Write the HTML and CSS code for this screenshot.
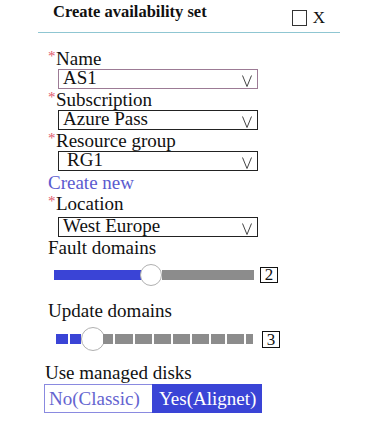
FILE: index.html
```html
<!DOCTYPE html>
<html>
<head>
<meta charset="utf-8">
<link rel="stylesheet" href="styles.css">
</head>
<body>
<div class="header">
  <div class="title">Create availability set</div>
  <div class="close-group"><span class="box-icon"></span><span class="x">X</span></div>
</div>
<div class="form">
  <div class="label"><span class="req">*</span>Name</div>
  <div class="select select-name"><span class="val">AS1</span><svg class="chev" width="10" height="12" viewBox="0 0 10 12"><polyline points="0.5,0.5 5,11.5 9.5,0.5" fill="none" stroke="#444" stroke-width="1"/></svg></div>
  <div class="label"><span class="req">*</span>Subscription</div>
  <div class="select"><span class="val">Azure Pass</span><svg class="chev" width="10" height="12" viewBox="0 0 10 12"><polyline points="0.5,0.5 5,11.5 9.5,0.5" fill="none" stroke="#444" stroke-width="1"/></svg></div>
  <div class="label"><span class="req">*</span>Resource group</div>
  <div class="select"><span class="val val-rg">RG1</span><svg class="chev" width="10" height="12" viewBox="0 0 10 12"><polyline points="0.5,0.5 5,11.5 9.5,0.5" fill="none" stroke="#444" stroke-width="1"/></svg></div>
  <div class="link">Create new</div>
  <div class="label"><span class="req">*</span>Location</div>
  <div class="select select-loc"><span class="val">West Europe</span><svg class="chev" width="10" height="12" viewBox="0 0 10 12"><polyline points="0.5,0.5 5,11.5 9.5,0.5" fill="none" stroke="#444" stroke-width="1"/></svg></div>
  <div class="label">Fault domains</div>
  <div class="slider-row slider-fault">
    <div class="track-blue"></div>
    <div class="thumb"></div>
    <div class="track-gray"></div>
    <div class="num">2</div>
  </div>
  <div class="label label-update">Update domains</div>
  <div class="slider-row slider-update">
    <div class="seg blue w12"></div>
    <div class="seg blue w11"></div>
    <div class="thumb thumb-lg"></div>
    <div class="seg gray w10"></div>
    <div class="seg gray w18"></div>
    <div class="seg gray w17"></div>
    <div class="seg gray w17"></div>
    <div class="seg gray w17"></div>
    <div class="seg gray w17"></div>
    <div class="seg gray w14"></div>
    <div class="seg gray w17"></div>
    <div class="seg gray w7"></div>
    <div class="num num-update">3</div>
  </div>
  <div class="label label-disks">Use managed disks</div>
  <div class="toggle">
    <div class="opt opt-no">No(Classic)</div>
    <div class="opt opt-yes">Yes(Alignet)</div>
  </div>
</div>
</body>
</html>
```
FILE: styles.css
```css
html, body {
  margin: 0;
  padding: 0;
  background: #ffffff;
}
body {
  font-family: "Liberation Serif", "Times New Roman", "DejaVu Serif", serif;
  color: #111111;
}
.header {
  margin-left: 38px;
  width: 302px;
  height: 33px;
  box-sizing: border-box;
  border-bottom: 1px solid #8fc6d2;
  padding: 0 15px;
  display: flex;
  justify-content: space-between;
  align-items: flex-start;
}
.title {
  font-size: 16.5px;
  font-weight: bold;
  line-height: 21px;
  padding-top: 1px;
}
.close-group {
  display: flex;
  align-items: flex-start;
  margin-top: 8px;
}
.box-icon {
  display: block;
  width: 15px;
  height: 16px;
  box-sizing: border-box;
  border: 1px solid #333333;
  margin-top: 2px;
}
.x {
  font-size: 17px;
  line-height: 20px;
  margin-left: 6px;
}
.form {
  padding-left: 48px;
  padding-top: 15px;
}
.label {
  font-size: 19px;
  line-height: 21px;
  height: 21px;
  white-space: nowrap;
}
.req {
  color: #e05a6c;
  font-size: 15px;
  vertical-align: top;
  line-height: 17px;
  display: inline-block;
  width: 8px;
}
.select {
  margin-left: 10px;
  width: 200px;
  height: 20px;
  box-sizing: border-box;
  border: 1px solid #222222;
  display: flex;
  justify-content: space-between;
  padding: 0 5px 0 4px;
}
.select-name {
  border-color: #9c7b95;
}
.select-loc {
  margin-top: 3px;
}
.val {
  font-size: 19px;
  line-height: 16px;
  white-space: nowrap;
}
.val-rg {
  padding-left: 4px;
}
.chev {
  display: block;
  align-self: flex-end;
  margin-bottom: 1px;
}
.link {
  color: #5b5bcf;
  font-size: 19px;
  line-height: 21px;
  margin-top: 1px;
}
.slider-row {
  display: flex;
  align-items: center;
  margin-top: 6px;
}
.slider-fault {
  margin-left: 6px;
  height: 22px;
}
.track-blue {
  width: 88px;
  height: 10px;
  background: #3a44d6;
}
.track-gray {
  width: 92px;
  height: 10px;
  background: #8c8c8c;
}
.thumb {
  width: 22px;
  height: 22px;
  box-sizing: border-box;
  border-radius: 50%;
  border: 1px solid #b0b0b0;
  background: #ffffff;
  margin-left: -2px;
  flex: none;
}
.num {
  width: 18px;
  height: 16px;
  box-sizing: border-box;
  border: 1px solid #111111;
  font-size: 17px;
  line-height: 14px;
  text-align: center;
  margin-left: 6px;
}
.label-update {
  margin-top: 14px;
}
.slider-update {
  margin-left: 8px;
  height: 24px;
  gap: 2px;
}
.seg {
  height: 10px;
  flex: none;
}
.blue { background: #3a44d6; }
.gray { background: #8c8c8c; }
.w7 { width: 7px; }
.w10 { width: 10px; }
.w11 { width: 11px; }
.w12 { width: 12px; }
.w14 { width: 14px; }
.w17 { width: 17px; }
.w18 { width: 18px; }
.thumb-lg {
  width: 24px;
  height: 24px;
  margin-left: -2px;
  margin-right: -4px;
}
.num-update {
  margin-left: 7px;
  height: 17px;
  line-height: 15px;
}
.label-disks {
  margin-top: 11px;
  margin-left: -3px;
}
.toggle {
  display: flex;
  margin-left: -4px;
  margin-top: 1px;
  height: 29px;
}
.opt {
  font-size: 19px;
  line-height: 27px;
  box-sizing: border-box;
  white-space: nowrap;
}
.opt-no {
  width: 108px;
  border: 1px solid #8a8ae0;
  border-right: none;
  color: #6464d0;
  padding-left: 4px;
}
.opt-yes {
  width: 110px;
  background: #3a44d6;
  color: #ffffff;
  padding-left: 7px;
  line-height: 29px;
}
```
